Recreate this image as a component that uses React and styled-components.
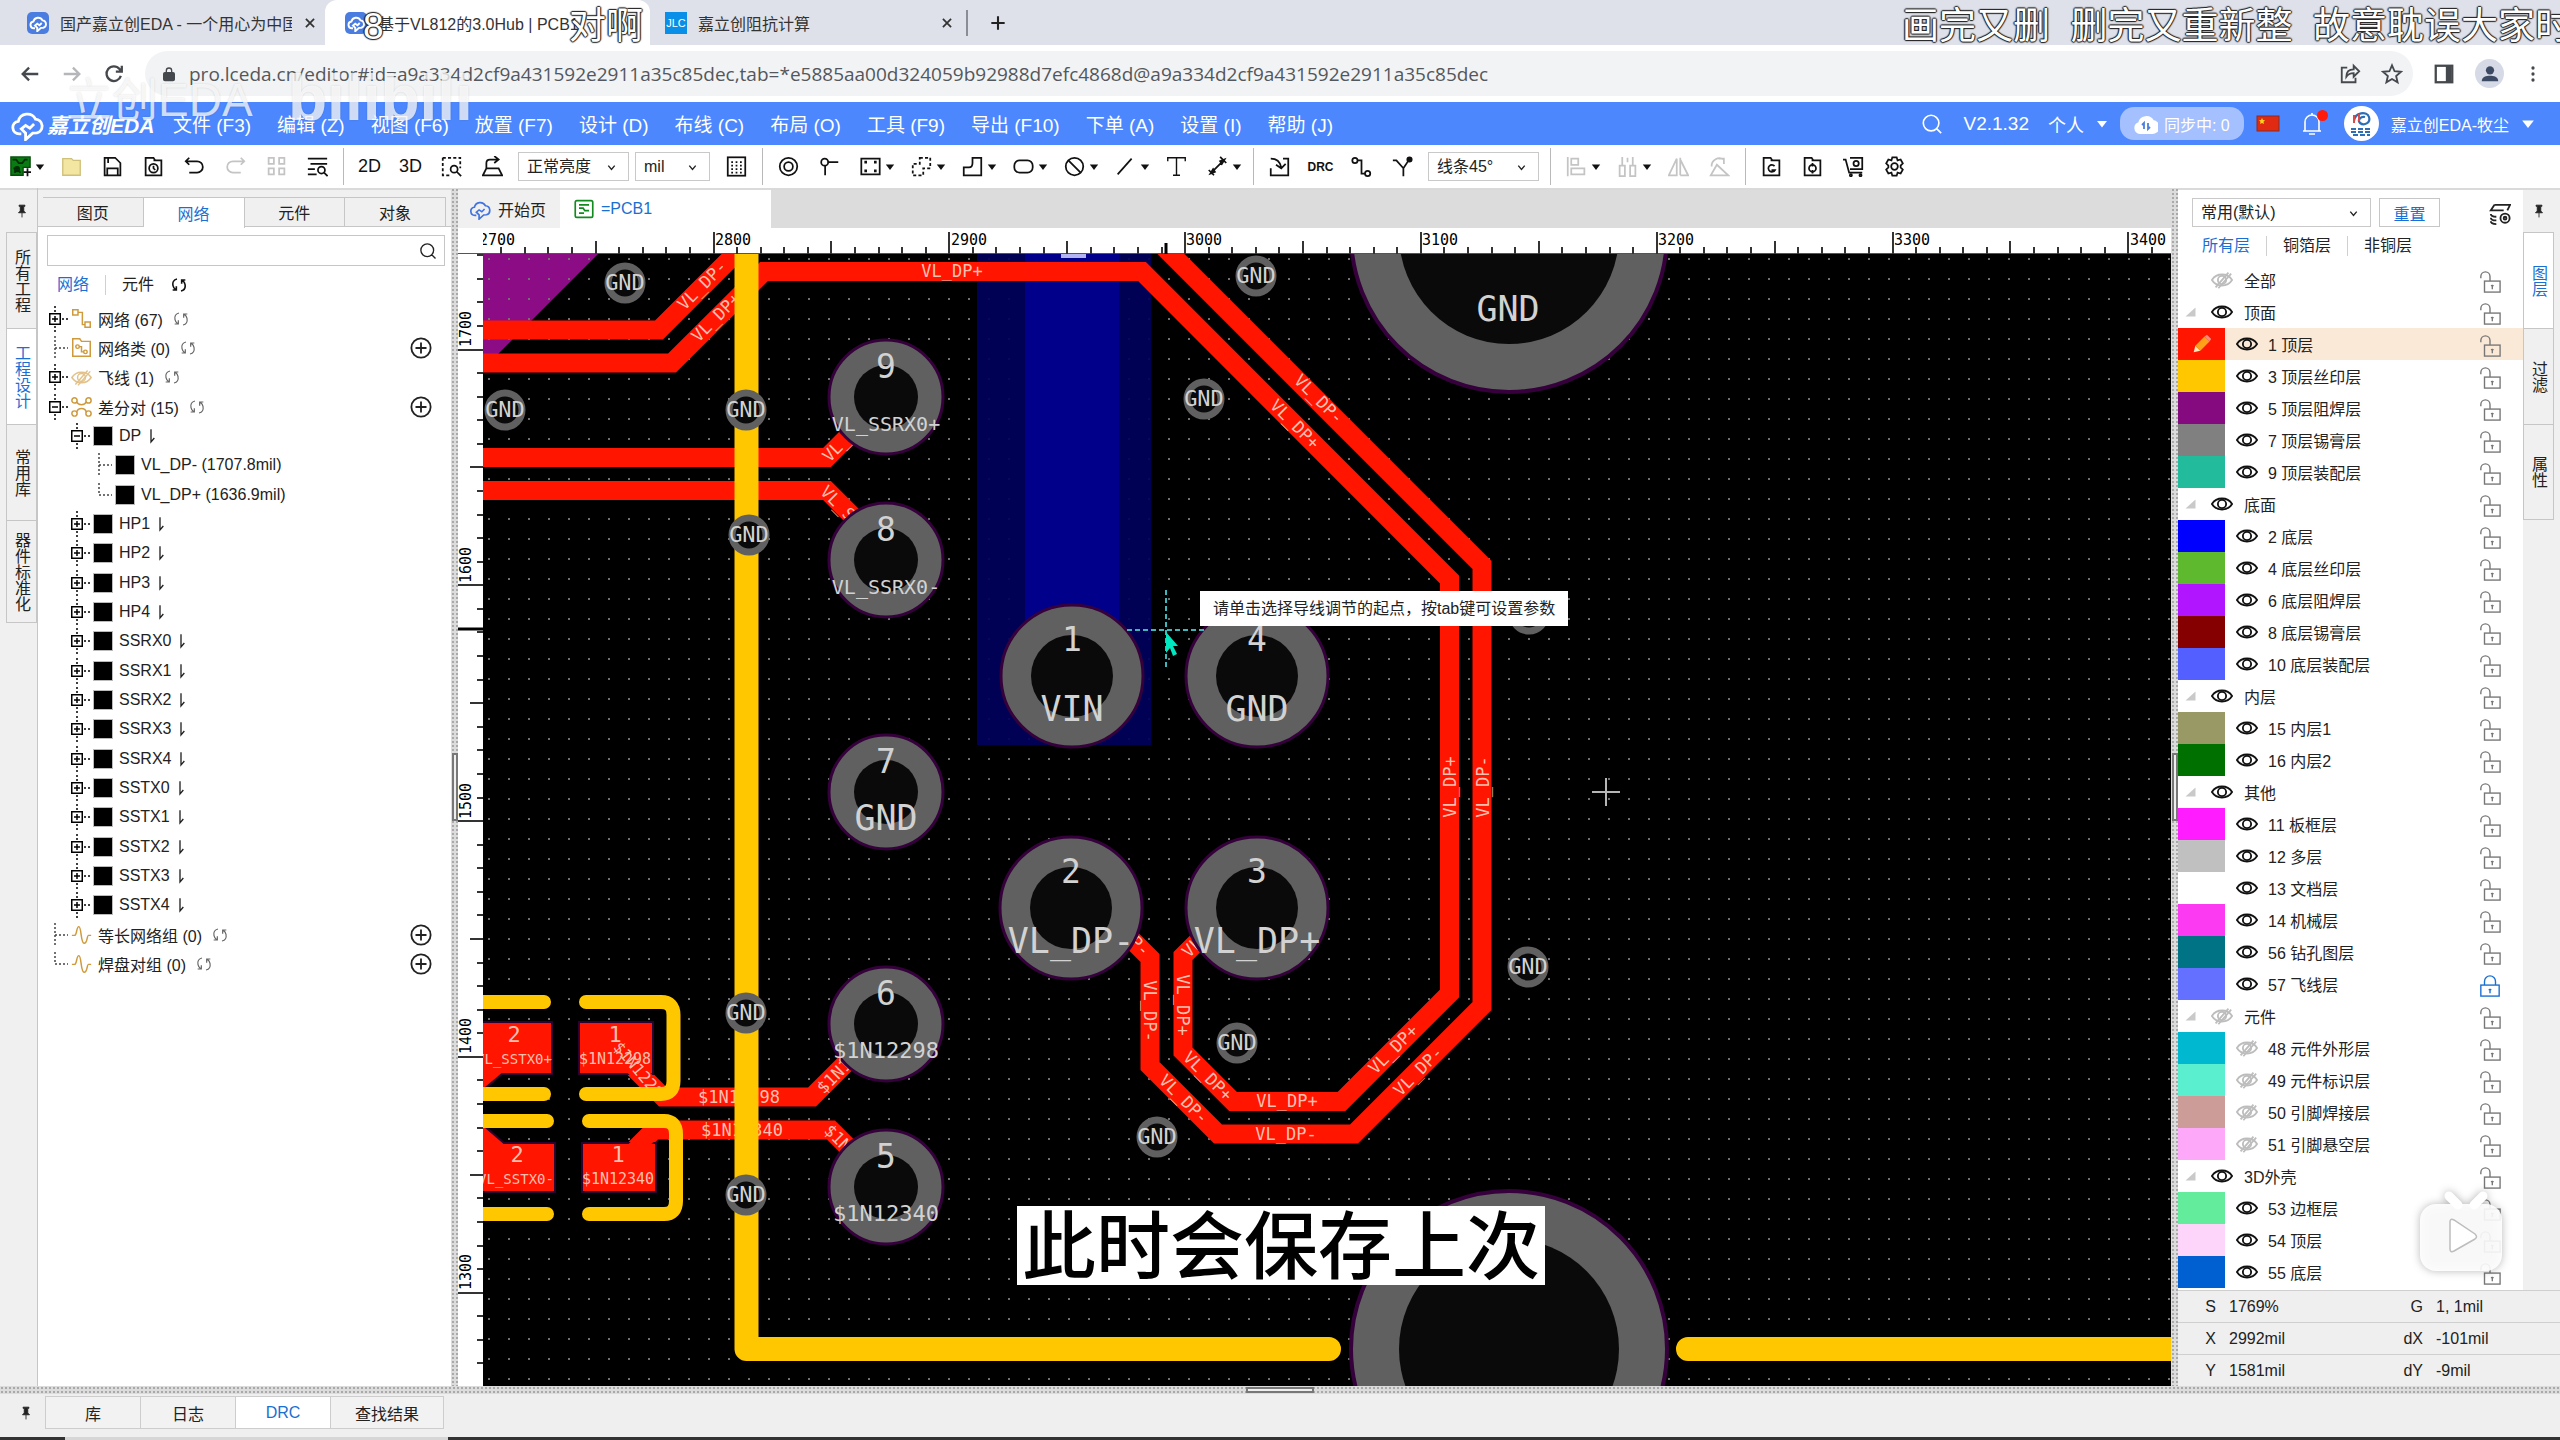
import React from 'react'
import styled, { createGlobalStyle, css } from 'styled-components'

const SHAPES = {
  cloud: <path d="M8 19H6.500a4.500 4.500 0 0 1-.6-8.960A6.500 6.500 0 0 1 18 8.500a5 5 0 0 1 1 9.800l-3 .2-5 4.500v-4.500l-3-3 3-2.500 3 2 3-3" />,
  back: <path d="M21 12H4M11 5l-7 7 7 7" />,
  forward: <path d="M3 12h17M13 5l7 7-7 7" />,
  reload: <path d="M19.500 14a8 8 0 1 1-1.500-7.500L20 9M20.500 3v6.500H14" />,
  lock: <><rect x="4" y="10" width="16" height="12" rx="2" fill="currentColor" /><path d="M8 10V7a4 4 0 0 1 8 0v3" /></>,
  close: <path d="M5 5l14 14M19 5L5 19" />,
  plus: <path d="M12 4v16M4 12h16" />,
  share: <path d="M9 5H3v16h15v-5M8 15c0-5 3-8 8-8V3l6 6-6 6v-4c-4 0-6 1-8 4z" />,
  star: <path d="M12 2.500l2.800 6.500 7 .6-5.300 4.600 1.600 6.900L12 17.400l-6.100 3.700 1.600-6.900L2.200 9.600l7-.6z" />,
  sidepanel: <><rect x="3" y="3" width="18" height="18" /><path d="M17 3v18" strokeWidth="6" /></>,
  person: <g fill="currentColor" stroke="none"><circle cx="12" cy="8" r="4.500" /><path d="M3 20c0-5 5-6 9-6s9 1 9 6z" /></g>,
  dots: <g fill="currentColor" stroke="none"><circle cx="12" cy="4" r="2.200" /><circle cx="12" cy="12" r="2.200" /><circle cx="12" cy="20" r="2.200" /></g>,
  search: <path d="M11 2.500a8.500 8.500 0 1 0 0 17 8.500 8.500 0 1 0 0-17M17 17l5 5" />,
  caret: <path d="M2 6h20L12 19z" fill="currentColor" stroke="none" />,
  chevron: <path d="M5 8l7 8 7-8" />,
  bell: <path d="M3 19h18M5 19v-9a7 7 0 0 1 14 0v9M12 3V1M9 22h6" />,
  sync: <><path d="M6 21a5 5 0 0 1-1-9.800A7.500 7.500 0 0 1 19 9a6 6 0 0 1-1 12z" fill="#fff" stroke="#fff" /><path d="M10 17v-6l-2 2M14 11v6l2-2" stroke="#4d7fe0" strokeWidth="1.800" /></>,
  newPcb: <><path d="M1 1h22v12h-8v9H1z" fill="#0a7a12" stroke="#064d0b" strokeWidth="1.500" /><path d="M3 4h4l3 4 4 0 3-4h3M4 14h6M5 19l3-3 4 3" stroke="#032d06" /><circle cx="8" cy="15" r="2.500" stroke="#032d06" /><path d="M20 14v9M15.500 18.500h9" stroke="#111" /></>,
  folder: <path d="M2 3h10l2 2h8v17H2z" fill="#f3e6a2" stroke="#cfc07a" strokeWidth="1.500" />,
  save: <path d="M3 2h12l6 6v14H3zM7 2v6M6 22v-8h12v8" />,
  clockFolder: <><path d="M3 2h9l2 3h7v17H3zM12 5h9" /><circle cx="12" cy="14" r="5" /><path d="M12 11v3l2 2" /></>,
  undo: <path d="M6 2L2 6l4 4M2 6h13a6.500 6.500 0 0 1 0 13H6" />,
  redo: <path d="M18 2l4 4-4 4M22 6H9a6.500 6.500 0 0 0 0 13h9" />,
  grid4: <path d="M3 2h6v7H3zM15 2h6v7h-6zM3 14h6v7H3zM15 14h6v7h-6z" />,
  listSearch: <><path d="M1 3h22M4 9h19M1 15h8M1 21h10" /><circle cx="16.500" cy="16" r="4" /><path d="M19.500 19l4 4" /></>,
  dashSearch: <><path d="M2 2h20v12M2 2v20h9" strokeDasharray="3.500 2.500" /><circle cx="15" cy="15" r="4" /><path d="M18 18l5 5" /></>,
  tilt: <path d="M1 22h22l-4-8H5zM5 14V8q0-4 4-4h9M14 0l5 4-5 4" />,
  dotGrid: <><rect x="2" y="1.500" width="20" height="21" /><path d="M6 7h13M6 11h13M6 15h13M6 19h13" strokeDasharray="2 3" /></>,
  via: <><circle cx="12" cy="12" r="10" /><circle cx="12" cy="12" r="5" /></>,
  net: <><circle cx="6.500" cy="7" r="4" /><path d="M10 7h12M7 11v11" /></>,
  padRect: <><rect x="1.500" y="3" width="21" height="18" /><path d="M5 7h3M16 7h3M5 17h3M16 17h3" strokeWidth="3" /></>,
  dashPoly: <path d="M10 2h12v12h-8v8H2V9h8z" strokeDasharray="3.500 2.500" />,
  poly: <path d="M12 2h10v20H2v-9h6q4 0 4-5z" />,
  oval: <rect x="1.500" y="5" width="21" height="14" rx="6" />,
  forbid: <><circle cx="12" cy="12" r="10" /><path d="M5 5l14 14" /></>,
  line: <path d="M3 21L19 3" />,
  text: <path d="M2 6V2h20v4M12 2v20M8 22h8" strokeWidth="1.600" />,
  measure: <path d="M5 19L19 5M2 16l6 6M15 1l7 7M4 20l3-5 2 3zM20 4l-3 5-2-3z" />,
  importBox: <path d="M16 3h6v19H2v-8M2 3q10 0 12 10M19 9l-5 5-6-4" />,
  netPath: <><circle cx="4.500" cy="5" r="3" /><circle cx="19" cy="20" r="3" /><path d="M7.500 5H12v15h4" /></>,
  fanout: <><path d="M1 5h4l8 9v9M13 14l6-9" /><circle cx="20" cy="4" r="2.500" fill="currentColor" /></>,
  align: <path d="M2 1v22M6 3h8v7H6zM6 14h15v7H6z" />,
  distribute: <path d="M3 11h6v12H3zM15 11h6v12h-6zM6 1v10M18 1v10M12 2v5" />,
  flipH: <path d="M10 3v19H1zM14 2v20M14 4l9 18h-9" />,
  flipV: <path d="M2 22h20L9 10zM3 12A9 9 0 0 1 17 4M17 9V3h-6" />,
  folderO: <><path d="M3 2h8l2 3h8v17H3zM11 5h10" /><circle cx="12" cy="14" r="4" /><path d="M12 8v4M12 16v4" /></>,
  folderG: <path d="M3 2h8l2 3h8v17H3zM11 5h10M15.500 11.500a4 4 0 1 0 .5 4.500h-4" />,
  cart: <><path d="M0 4h3l4 15h15M8 2h14v13H8" /><circle cx="15" cy="8.500" r="3" /><circle cx="9" cy="22" r="1.200" /><circle cx="20" cy="22" r="1.200" /></>,
  gear: <><path d="M9.500 1.500h5l1 3.500 3.500-1 2.500 4.500-2.500 2.500v2l2.500 2.500-2.500 4.500-3.500-1-1 3.500h-5l-1-3.500-3.500 1-2.500-4.500L5 13v-2L2.500 8.500 5 4l3.500 1z" /><circle cx="12" cy="12" r="3.800" /></>,
  pin: <path d="M7 2h10v2h-2v8l3 3H6l3-3V4H7zM12 15v8" fill="currentColor" strokeWidth="1.500" />,
  refresh: <path d="M9 3C4 4 2 8 3 13c.5 2.500 2 4.500 4 6M2.500 19.500H8V14M15 21c5-1 7-5 6-10-.5-2.500-2-4.500-4-6M21.500 4.500H16V10" />,
  netTree: <path d="M2 2h6v6H2zM16 16h6v6h-6zM8 5h5v14h3" />,
  netClass: <><path d="M2 2h8l2 3h10v17H2zM12 5h10" /><circle cx="7.500" cy="11" r="2" /><circle cx="16.500" cy="17" r="2" /><path d="M9.500 11H12v6h2.500" /></>,
  eye: <><path d="M1 12c5-8 17-8 22 0-5 8-17 8-22 0z" /><circle cx="12" cy="12" r="4.500" /></>,
  eyeOff: <><path d="M1 12c5-8 17-8 22 0-5 8-17 8-22 0z" /><circle cx="12" cy="12" r="4.500" /><path d="M5 20L19 4M8 21L22 5" /></>,
  diffPair: <><circle cx="4" cy="5" r="3" /><circle cx="20" cy="5" r="3" /><circle cx="4" cy="20" r="3" /><circle cx="20" cy="20" r="3" /><path d="M6.500 6.500C8 11 16 11 17.500 6.500M6.500 18.500C8 13 16 13 17.500 18.500" /></>,
  wave: <path d="M1 13h3c3 0 2-10 5-10s2 19 6 19 3-9 5-9h3" />,
  addCircle: <><circle cx="12" cy="12" r="10.500" /><path d="M12 6v12M6 12h12" /></>,
  branch: <path d="M6 2v19l5-6" />,
  pcbDoc: <><rect x="1.500" y="2" width="21" height="20" rx="2" /><path d="M6 7h12M6 11h5l2 3h5M6 17h6" /></>,
  layerSet: <><path d="M6 2h17l-3 6M6 2L2 8h14M2 12c0 2 2 3 6 3M2 16c0 2 2 3 6 3M2 20c0 2 2 3 6 3" /><circle cx="17.500" cy="16.500" r="5" /><circle cx="17.500" cy="16.500" r="1.500" /></>,
  fold: <path d="M21 3v18H1z" fill="#c9c9c9" stroke="none" />,
  unlocked: <><rect x="6" y="11" width="17" height="12" /><path d="M2 8V6a5 5 0 0 1 10 0v5M14.500 15v5M13 16h3" /></>,
  locked: <><rect x="2" y="11" width="20" height="12" /><path d="M6 11V7a6 6 0 0 1 12 0v4M12 15v5M10.500 16h3" /></>,
  pencil: <g stroke="none"><path d="M2 22l2-8 6 6z" fill="#ffe9c0" /><path d="M4 14L15 3l6 6-11 11z" fill="#ffa21a" /><path d="M15 3l3-2 5 5-2 3z" fill="#f28b82" /></g>,
}

function Icon({ name, size = 22, weight = 2 }) {
  return (
    <svg width={size} height={size} viewBox="0 0 24 24" fill="none" stroke="currentColor" strokeWidth={weight} aria-hidden="true">
      {SHAPES[name]}
    </svg>
  )
}

const MENUS = ['文件 (F3)', '编辑 (Z)', '视图 (F6)', '放置 (F7)', '设计 (D)', '布线 (C)', '布局 (O)', '工具 (F9)', '导出 (F10)', '下单 (A)', '设置 (I)', '帮助 (J)']

const TREE = [
  { level: 0, toggle: '+', icon: 'netTree', label: '网络 (67)', refresh: true },
  { level: 0, icon: 'netClass', label: '网络类 (0)', refresh: true, add: true },
  { level: 0, toggle: '+', icon: 'eyeOff', label: '飞线 (1)', refresh: true },
  { level: 0, toggle: '-', icon: 'diffPair', label: '差分对 (15)', refresh: true, add: true },
  { level: 1, toggle: '-', label: 'DP', branch: true },
  { level: 2, label: 'VL_DP- (1707.8mil)' },
  { level: 2, label: 'VL_DP+ (1636.9mil)', last: true },
  ...['HP1', 'HP2', 'HP3', 'HP4', 'SSRX0', 'SSRX1', 'SSRX2', 'SSRX3', 'SSRX4', 'SSTX0', 'SSTX1', 'SSTX2', 'SSTX3', 'SSTX4'].map(
    (label) => ({ level: 1, toggle: '+', label, branch: true })
  ),
  { level: 0, icon: 'wave', label: '等长网络组 (0)', refresh: true, add: true },
  { level: 0, icon: 'wave', label: '焊盘对组 (0)', refresh: true, add: true, last: true },
]

const LAYERS = [
  { group: true, label: '全部', hidden: true, root: true },
  { group: true, label: '顶面' },
  { label: '1 顶层', color: '#ff1500', active: true },
  { label: '3 顶层丝印层', color: '#ffc700' },
  { label: '5 顶层阻焊层', color: '#850a7f' },
  { label: '7 顶层锡膏层', color: '#808080' },
  { label: '9 顶层装配层', color: '#22bb9b' },
  { group: true, label: '底面' },
  { label: '2 底层', color: '#0000ff' },
  { label: '4 底层丝印层', color: '#5fb92e' },
  { label: '6 底层阻焊层', color: '#b114ff' },
  { label: '8 底层锡膏层', color: '#850000' },
  { label: '10 底层装配层', color: '#535fff' },
  { group: true, label: '内层' },
  { label: '15 内层1', color: '#999966' },
  { label: '16 内层2', color: '#007000' },
  { group: true, label: '其他' },
  { label: '11 板框层', color: '#ff1cff' },
  { label: '12 多层', color: '#c0c0c0' },
  { label: '13 文档层', color: '#ffffff' },
  { label: '14 机械层', color: '#fb3af1' },
  { label: '56 钻孔图层', color: '#007385' },
  { label: '57 飞线层', color: '#6470ff', locked: true },
  { group: true, label: '元件', hidden: true },
  { label: '48 元件外形层', color: '#00b8d0', hidden: true },
  { label: '49 元件标识层', color: '#5aefcf', hidden: true },
  { label: '50 引脚焊接层', color: '#cc9c98', hidden: true },
  { label: '51 引脚悬空层', color: '#fda8f8', hidden: true },
  { group: true, label: '3D外壳' },
  { label: '53 边框层', color: '#62ec9c' },
  { label: '54 顶层', color: '#fdd5fb' },
  { label: '55 底层', color: '#0060d2' },
]

const PADS = [
  { x: 886, y: 397, no: '9', name: 'VL_SSRX0+', size: 20 },
  { x: 886, y: 560, no: '8', name: 'VL_SSRX0-', size: 20 },
  { x: 886, y: 792, no: '7', name: 'GND', size: 35 },
  { x: 886, y: 1024, no: '6', name: '$1N12298', size: 22 },
  { x: 886, y: 1187, no: '5', name: '$1N12340', size: 22 },
  { x: 1072, y: 676, no: '1', name: 'VIN', size: 35, big: true },
  { x: 1257, y: 676, no: '4', name: 'GND', size: 35, big: true },
  { x: 1071, y: 908, no: '2', name: 'VL_DP-', size: 35, big: true },
  { x: 1257, y: 908, no: '3', name: 'VL_DP+', size: 35, big: true },
]

const VIAS = [
  [625, 283], [505, 410], [746, 410], [749, 535], [1256, 276], [1204, 399], [1529, 614],
  [746, 1013], [746, 1195], [1528, 967], [1237, 1043], [1157, 1137],
]

const TRACES = [
  'M470 330H659L745 244',
  'M470 363H672L764 271.500H1142L1449.500 579.500V993.500L1341.500 1101.500H1233L1183 1051.500V956L1215 924',
  'M1161 244L1482 565V1006L1354 1134H1218L1150 1066V958L1120 928',
  'M470 457.500H827L860 424.500',
  'M470 490.500H827L860 523.500',
  'M620 1054L663 1097H812L850 1059',
  'M625 1159L654 1130H831L860 1159',
]

const NET_LABELS = [
  [952, 271, 0, 'VL_DP+'], [702, 285, -45, 'VL_DP-'], [716, 317, -45, 'VL_DP+'],
  [836, 448, -45, 'VL_'], [838, 503, 45, 'VL_S'],
  [1319, 399, 45, 'VL_DP-'], [1295, 424, 45, 'VL_DP+'],
  [1450, 787, -90, 'VL_DP+'], [1483, 787, -90, 'VL_DP-'],
  [1393, 1049, -45, 'VL_DP+'], [1418, 1071, -45, 'VL_DP-'],
  [1287, 1101, 0, 'VL_DP+'], [1286, 1134, 0, 'VL_DP-'],
  [1208, 1076, 45, 'VL_DP+'], [1184, 1099, 45, 'VL_DP-'],
  [1150, 1011, 90, 'VL_DP-'], [1183, 1005, 90, 'VL_DP+'],
  [1140, 946, 45, 'P-'], [1192, 947, -45, 'VL'],
  [739, 1097, 0, '$1N12298'], [742, 1130, 0, '$1N12340'],
  [834, 1076, -45, '$1N1'], [838, 1138, 45, '$1N'],
]

function Pad({ x, y, no, name, size, big }) {
  return (
    <g>
      <circle cx={x} cy={y} r={big ? 71 : 57} fill="#606060" stroke="#35003b" strokeWidth="3" />
      <circle cx={x} cy={y} r={big ? 41 : 32} fill="#0a0a0a" />
      <text x={x} y={y - (big ? 25 : 19)} fontSize="33">{no}</text>
      <text x={x} y={y + (size < 30 ? 34 : big ? 45 : 38)} fontSize={size}>{name}</text>
    </g>
  )
}

function Board() {
  return (
    <StyledBoard role="img" aria-label="PCB1">
      <defs>
        <pattern id="dots" x="588" y="258" width="20" height="20" patternUnits="userSpaceOnUse">
          <rect width="2" height="2" fill="#707070" />
        </pattern>
      </defs>
      <g transform="translate(-483 -254)">
        <path d="M470 254H598L470 382z" fill="#8b0c84" />
        <rect x="483" y="254" width="2600" height="2000" fill="url(#dots)" />
        <rect x="977" y="250" width="174" height="495" fill="#00005c" fillOpacity="0.8" />
        <rect x="977" y="250" width="174" height="495" fill="#00005c" fillOpacity="0.6" />
        <rect x="1025" y="250" width="94" height="430" fill="#00008b" />
        <rect x="1061" y="250" width="25" height="8" fill="#b4b4f4" />
        <g fill="none" stroke="#ff1500" strokeWidth="19">
          {TRACES.map((d) => <path key={d} d={d} />)}
        </g>
        <g fill="#ff1500" stroke="#2c0030" strokeWidth="2">
          <path d="M470 1022H552V1074H502L483 1090H470z" />
          <path d="M579 1022h74v52h-74z" />
          <path d="M470 1125h13l21 18h51v49h-85z" />
          <path d="M582 1143h74v49h-74z" />
        </g>
        <path d="M622 1056L660 1094M628 1156L652 1132" stroke="#ff1500" strokeWidth="16" />
        <g fill="#ffbfae" fontSize="17" textAnchor="middle">
          {NET_LABELS.map(([x, y, turn, name]) => (
            <text key={x + name} transform={`translate(${x} ${y}) rotate(${turn})`} y="6">{name}</text>
          ))}
          <text transform="translate(638 1070) rotate(50)" y="5" fontSize="16">$1N1229</text>
          <text x="514" y="1042" fontSize="22">2</text>
          <text x="615" y="1042" fontSize="22">1</text>
          <text x="517" y="1162" fontSize="22">2</text>
          <text x="618" y="1162" fontSize="22">1</text>
          <text x="514" y="1064" fontSize="14">VL_SSTX0+</text>
          <text x="615" y="1064" fontSize="15">$1N12298</text>
          <text x="516" y="1184" fontSize="14">VL_SSTX0-</text>
          <text x="618" y="1184" fontSize="15">$1N12340</text>
        </g>
        <g fill="none" stroke="#ffc700" strokeLinecap="round" strokeLinejoin="round">
          <path d="M746.500 240V1349H1329M1688 1349H3000" strokeWidth="24" />
          <path d="M470 1002h74M470 1094h74M586 1002h75q12.500 0 12.500 13v66q0 13-12.500 13h-75" strokeWidth="14" />
          <path d="M470 1121h77M470 1214h77M589 1121h75q12 0 12 13v67q0 13-12 13h-75" strokeWidth="14" />
        </g>
        <g fill="#d2d2d2" textAnchor="middle">
          {PADS.map((pad) => <Pad key={pad.no} {...pad} />)}
          {[234, 1349].map((y) => (
            <g key={y}>
              <circle cx="1509" cy={y} r="158" fill="#606060" stroke="#35003b" strokeWidth="4" />
              <circle cx="1509" cy={y} r="110" fill="#0a0a0a" />
            </g>
          ))}
          <text x="1508" y="321" fontSize="35">GND</text>
          {VIAS.map(([x, y]) => (
            <g key={`${x}-${y}`}>
              <circle cx={x} cy={y} r="17" fill="#0a0a0a" stroke="#606060" strokeWidth="7" />
              <text x={x} y={y + 7} fontSize="22">GND</text>
            </g>
          ))}
        </g>
        <path d="M1127 630h79M1166 590v80" stroke="#3fb8bd" strokeWidth="2" strokeDasharray="5 3" />
        <path d="M1166 632l12 14h-5l4 8-4 2-3-8-4 5z" fill="#00e8c0" />
        <path d="M1592 792h28M1606 778v28" stroke="#b5b5b5" strokeWidth="2" />
      </g>
    </StyledBoard>
  )
}

const TICK = 23.58

function TopRuler() {
  return (
    <StyledTopRuler aria-hidden="true">
      <g transform="translate(-483 0)" stroke="#333" strokeWidth="2">
        {Array.from({ length: 120 }, (_, i) => {
          const x = Math.round(477.7 + i * TICK)
          return <path key={i} d={`M${x} 26V${i % 10 === 0 ? 4 : i % 5 === 0 ? 13 : 19}`} />
        })}
        <path d="M1166 26V15" stroke="#000" strokeWidth="3" />
        {Array.from({ length: 12 }, (_, i) => (
          <text key={i} x={Math.round(479 + i * TICK * 10)} y="17" stroke="none">{2700 + i * 100}</text>
        ))}
      </g>
    </StyledTopRuler>
  )
}

function SideRuler() {
  return (
    <StyledSideRuler aria-hidden="true">
      <g transform="translate(0 -254)" stroke="#333" strokeWidth="2">
        {Array.from({ length: 90 }, (_, i) => {
          const y = Math.round(349.5 + (i - 4) * TICK)
          return <path key={i} d={`M25 ${y}H${(i - 4) % 10 === 0 ? 0 : (i - 4) % 5 === 0 ? 12 : 19}`} />
        })}
        <path d="M0 629H25" stroke="#000" strokeWidth="3" />
        {Array.from({ length: 5 }, (_, i) => (
          <text key={i} transform={`translate(13 ${Math.round(347 + i * TICK * 10)}) rotate(-90)`} stroke="none">{1700 - i * 100}</text>
        ))}
      </g>
    </StyledSideRuler>
  )
}

function Tool({ icon, label, text, arrow, muted }) {
  return (
    <StyledTool type="button" aria-label={text ? undefined : label} $arrow={arrow}>
      <StyledToolFace $muted={muted} $small={text === 'DRC'}>{text || <Icon name={icon} size={21} />}</StyledToolFace>
      {arrow && <Icon name="caret" size={10} />}
    </StyledTool>
  )
}

function Picker({ label, value, width }) {
  return (
    <StyledPicker $width={width}>
      <select aria-label={label} defaultValue={value}>
        <option>{value}</option>
      </select>
      <Icon name="chevron" size={11} weight={3} />
    </StyledPicker>
  )
}

function BrowserBar() {
  return (
    <header>
      <StyledTabStrip>
        <StyledBrowserTab $width={325}>
          <StyledFavicon><Icon name="cloud" size={18} weight={2.5} /></StyledFavicon>
          <StyledTabTitle>国产嘉立创EDA - 一个用心为中国</StyledTabTitle>
          <StyledGhost type="button" aria-label="关闭"><Icon name="close" size={14} weight={3} /></StyledGhost>
        </StyledBrowserTab>
        <StyledBrowserTab $width={325} $active>
          <StyledFavicon><Icon name="cloud" size={18} weight={2.5} /></StyledFavicon>
          <StyledTabTitle>基于VL812的3.0Hub | PCB1</StyledTabTitle>
        </StyledBrowserTab>
        <StyledBrowserTab $width={318} $ruled>
          <StyledFavicon $jlc>JLC</StyledFavicon>
          <StyledTabTitle>嘉立创阻抗计算</StyledTabTitle>
          <StyledGhost type="button" aria-label="关闭"><Icon name="close" size={14} weight={3} /></StyledGhost>
        </StyledBrowserTab>
        <StyledNewTab type="button" aria-label="新标签页"><Icon name="plus" size={20} weight={2.5} /></StyledNewTab>
      </StyledTabStrip>
      <StyledAddressRow>
        <StyledNavButtons>
          <StyledGhost type="button" aria-label="后退"><Icon name="back" weight={2.5} /></StyledGhost>
          <StyledGhost type="button" aria-label="前进" $muted><Icon name="forward" weight={2.5} /></StyledGhost>
          <StyledGhost type="button" aria-label="刷新"><Icon name="reload" weight={2.5} /></StyledGhost>
        </StyledNavButtons>
        <StyledAddress>
          <Icon name="lock" size={16} />
          <input
            aria-label="地址"
            defaultValue="pro.lceda.cn/editor#id=a9a334d2cf9a431592e2911a35c85dec,tab=*e5885aa00d324059b92988d7efc4868d@a9a334d2cf9a431592e2911a35c85dec"
          />
          <StyledGhost type="button" aria-label="分享"><Icon name="share" /></StyledGhost>
          <StyledGhost type="button" aria-label="收藏"><Icon name="star" /></StyledGhost>
        </StyledAddress>
        <StyledNavButtons>
          <StyledGhost type="button" aria-label="侧边栏"><Icon name="sidepanel" weight={2.5} /></StyledGhost>
          <StyledProfile type="button" aria-label="用户"><Icon name="person" /></StyledProfile>
          <StyledGhost type="button" aria-label="更多"><Icon name="dots" size={18} /></StyledGhost>
        </StyledNavButtons>
      </StyledAddressRow>
    </header>
  )
}

function MenuBar() {
  return (
    <StyledMenuBar>
      <StyledBrand><Icon name="cloud" size={34} weight={2} /><span>嘉立创EDA</span></StyledBrand>
      <StyledMenus>
        {MENUS.map((menu) => <button type="button" key={menu}>{menu}</button>)}
      </StyledMenus>
      <StyledAccount>
        <StyledGhost type="button" aria-label="搜索"><Icon name="search" weight={1.8} /></StyledGhost>
        <StyledVersion>V2.1.32</StyledVersion>
        <StyledScope type="button">个人<Icon name="caret" size={12} /></StyledScope>
        <StyledSync><Icon name="sync" size={24} />同步中: 0</StyledSync>
        <svg width="24" height="17" viewBox="0 0 24 17" aria-hidden="true">
          <rect x="1" y="1" width="22" height="15" fill="#e02a12" stroke="#8f2a1c" />
          <path d="M6 3l1 2 2 .3-1.500 1.400.4 2.300L6 8l-1.900 1 .4-2.300L3 5.300 5 5z" fill="#ffd21f" />
        </svg>
        <StyledBell type="button" aria-label="消息"><Icon name="bell" size={24} weight={1.6} /></StyledBell>
        <svg width="35" height="35" viewBox="0 0 35 35" aria-hidden="true">
          <circle cx="17.500" cy="17.500" r="17.500" fill="#fff" />
          <path d="M10 15c1-9 13-10 15-4s-5 9-9 6c-3-3 1-7 5-6" fill="none" stroke="#2d6fb4" strokeWidth="2.200" />
          <path d="M10 9v8M15 8v7" stroke="#d94a4a" strokeWidth="2" />
          <path d="M7 23h21M7 26h21M9 29h17" stroke="#2d6fb4" strokeWidth="1.800" strokeDasharray="5 2" />
        </svg>
        <button type="button">嘉立创EDA-牧尘<Icon name="caret" size={14} /></button>
      </StyledAccount>
    </StyledMenuBar>
  )
}

function Toolbar() {
  return (
    <StyledToolbar>
      <Tool icon="newPcb" label="新建" arrow />
      <Tool icon="folder" label="打开" />
      <Tool icon="save" label="保存" />
      <Tool icon="clockFolder" label="历史" />
      <Tool icon="undo" label="撤销" />
      <Tool icon="redo" label="重做" muted />
      <Tool icon="grid4" label="阵列" muted />
      <Tool icon="listSearch" label="查找" />
      <StyledRule />
      <Tool text="2D" />
      <Tool text="3D" />
      <Tool icon="dashSearch" label="框选放大" />
      <Tool icon="tilt" label="翻转视图" />
      <Picker label="亮度" value="正常亮度" width={111} />
      <Picker label="单位" value="mil" width={75} />
      <Tool icon="dotGrid" label="网格" />
      <StyledRule />
      <Tool icon="via" label="过孔" />
      <Tool icon="net" label="焊盘" />
      <Tool icon="padRect" label="元件" arrow />
      <Tool icon="dashPoly" label="铺铜" arrow />
      <Tool icon="poly" label="填充" arrow />
      <Tool icon="oval" label="挖槽" arrow />
      <Tool icon="forbid" label="禁止区域" arrow />
      <Tool icon="line" label="线条" arrow />
      <Tool icon="text" label="文本" />
      <Tool icon="measure" label="测量" arrow />
      <StyledRule />
      <Tool icon="importBox" label="导入变更" />
      <Tool text="DRC" />
      <Tool icon="netPath" label="布线" />
      <Tool icon="fanout" label="扇出" />
      <Picker label="拐角" value="线条45°" width={111} />
      <StyledRule />
      <Tool icon="align" label="对齐" arrow muted />
      <Tool icon="distribute" label="分布" arrow muted />
      <Tool icon="flipH" label="水平翻转" muted />
      <Tool icon="flipV" label="垂直翻转" muted />
      <StyledRule />
      <Tool icon="folderG" label="导出Gerber" />
      <Tool icon="folderO" label="导出坐标" />
      <Tool icon="cart" label="下单" />
      <Tool icon="gear" label="设置" />
    </StyledToolbar>
  )
}

function TreeRow({ level, toggle, icon, label, refresh, add, branch, last }) {
  return (
    <StyledTreeRow $level={level}>
      {toggle ? (
        <StyledToggle type="button" aria-label={label}>
          <svg width="22" height="28" viewBox="0 0 22 28" fill="none" stroke="#000">
            <path d="M6 1v6M6 21v6M13 14h7" strokeWidth="1.500" strokeDasharray="2 2" />
            <rect x="0.750" y="8.750" width="10.500" height="10.500" strokeWidth="1.500" />
            <path d={toggle === '+' ? 'M3 14h6M6 11v6' : 'M3 14h6'} strokeWidth="1.500" />
          </svg>
        </StyledToggle>
      ) : (
        <svg width="22" height="28" viewBox="0 0 22 28" fill="none" stroke="#444" strokeDasharray="2 2" aria-hidden="true">
          <path d={last ? 'M6 2v12h13' : 'M6 2v23M6 14h13'} strokeWidth="1.500" />
        </svg>
      )}
      {icon ? <StyledTreeIcon $soft={icon === 'eyeOff'}><Icon name={icon} size={21} weight={1.7} /></StyledTreeIcon> : <StyledSwatchBox />}
      <span>{label}</span>
      {refresh && <StyledSmall type="button" aria-label="刷新"><Icon name="refresh" size={16} weight={1.8} /></StyledSmall>}
      {branch && <Icon name="branch" size={16} />}
      {add && <StyledAdd type="button" aria-label="新增"><Icon name="addCircle" /></StyledAdd>}
    </StyledTreeRow>
  )
}

function LeftPanel() {
  return (
    <>
      <StyledRail>
        <StyledPin type="button" aria-label="固定"><Icon name="pin" size={14} /></StyledPin>
        <StyledRailTab type="button">所有工程</StyledRailTab>
        <StyledRailTab type="button" $active>工程设计</StyledRailTab>
        <StyledRailTab type="button">常用库</StyledRailTab>
        <StyledRailTab type="button" $tall>器件标准化</StyledRailTab>
      </StyledRail>
      <StyledLeftPanel>
        <StyledPanelTabs>
          <button type="button">图页</button>
          <button type="button" aria-current="true">网络</button>
          <button type="button">元件</button>
          <button type="button">对象</button>
        </StyledPanelTabs>
        <StyledSearch>
          <input type="search" aria-label="搜索网络" />
          <Icon name="search" size={18} weight={1.8} />
        </StyledSearch>
        <StyledSubTabs $left>
          <button type="button" aria-current="true">网络</button>
          <button type="button">元件</button>
          <StyledSmall type="button" aria-label="刷新" $dark><Icon name="refresh" size={16} weight={2.4} /></StyledSmall>
        </StyledSubTabs>
        <StyledTree>
          {TREE.map((row) => <TreeRow key={row.label} {...row} />)}
        </StyledTree>
      </StyledLeftPanel>
      <StyledSplitter><StyledGrip /></StyledSplitter>
    </>
  )
}

function LayerRow({ group, root, label, color, hidden, locked, active }) {
  return (
    <StyledLayerRow $active={active}>
      {group ? <StyledFold>{!root && <Icon name="fold" size={12} />}</StyledFold> : (
        <StyledColor style={{ background: color }}>{active && <Icon name="pencil" size={20} />}</StyledColor>
      )}
      <StyledEye type="button" aria-label={`显示 ${label}`} $off={hidden} $group={group}>
        <Icon name={hidden ? 'eyeOff' : 'eye'} size={22} />
      </StyledEye>
      <span>{label}</span>
      <StyledLock type="button" aria-label={`锁定 ${label}`} $on={locked}>
        <Icon name={locked ? 'locked' : 'unlocked'} size={22} weight={1.5} />
      </StyledLock>
    </StyledLayerRow>
  )
}

function RightPanel() {
  return (
    <>
      <StyledSplitter><StyledGrip /></StyledSplitter>
      <StyledRightPanel>
        <StyledLayerArea>
          <StyledLayerHead>
            <Picker label="图层方案" value="常用(默认)" width={179} />
            <StyledReset type="button">重置</StyledReset>
            <StyledAdd type="button" aria-label="图层管理"><Icon name="layerSet" size={22} /></StyledAdd>
          </StyledLayerHead>
          <StyledSubTabs>
            <button type="button" aria-current="true">所有层</button>
            <button type="button">铜箔层</button>
            <button type="button">非铜层</button>
          </StyledSubTabs>
          <StyledLayers>
            {LAYERS.map((row) => <LayerRow key={row.label} {...row} />)}
          </StyledLayers>
        </StyledLayerArea>
        <StyledRail $right>
          <StyledPin type="button" aria-label="固定"><Icon name="pin" size={14} /></StyledPin>
          <StyledRailTab type="button" $active>图层</StyledRailTab>
          <StyledRailTab type="button">过滤</StyledRailTab>
          <StyledRailTab type="button">属性</StyledRailTab>
        </StyledRail>
        <StyledStatus>
          <div><dt>S</dt><dd>1769%</dd><dt>G</dt><dd>1, 1mil</dd></div>
          <div><dt>X</dt><dd>2992mil</dd><dt>dX</dt><dd>-101mil</dd></div>
          <div><dt>Y</dt><dd>1581mil</dd><dt>dY</dt><dd>-9mil</dd></div>
        </StyledStatus>
      </StyledRightPanel>
    </>
  )
}

function App() {
  return (
    <StyledPage>
      <GlobalStyle />
      <BrowserBar />
      <MenuBar />
      <Toolbar />
      <StyledWorkspace>
        <LeftPanel />
        <StyledCenter>
          <StyledDocTabs>
            <StyledDocTab type="button"><Icon name="cloud" size={22} weight={1.8} />开始页</StyledDocTab>
            <StyledDocTab type="button" $active><Icon name="pcbDoc" size={20} />=PCB1</StyledDocTab>
          </StyledDocTabs>
          <StyledRulerRow><TopRuler /></StyledRulerRow>
          <StyledCanvasRow>
            <SideRuler />
            <StyledCanvas>
              <Board />
              <StyledHint role="tooltip">请单击选择导线调节的起点，按tab键可设置参数</StyledHint>
              <StyledSubtitle>此时会保存上次</StyledSubtitle>
            </StyledCanvas>
          </StyledCanvasRow>
        </StyledCenter>
        <RightPanel />
      </StyledWorkspace>
      <StyledSplitter $flat><StyledGrip $flat /></StyledSplitter>
      <StyledBottomBar>
        <StyledPin type="button" aria-label="固定"><Icon name="pin" size={14} /></StyledPin>
        <StyledBottomTab type="button">库</StyledBottomTab>
        <StyledBottomTab type="button">日志</StyledBottomTab>
        <StyledBottomTab type="button" $active>DRC</StyledBottomTab>
        <StyledBottomTab type="button" $wide>查找结果</StyledBottomTab>
      </StyledBottomBar>

      <StyledComment $left={363}>8</StyledComment>
      <StyledComment $left={569}>对啊</StyledComment>
      <StyledComment $left={1902}>画完又删  删完又重新整  故意耽误大家时</StyledComment>
      <StyledMark $left={66} $top={73} $size={46}>立创EDA</StyledMark>
      <StyledMark $left={288} $top={60} $size={64} $bold>bilibili</StyledMark>
      <StyledPlayer viewBox="0 0 100 96" aria-hidden="true">
        <path d="M38 12l9 9M72 12l-9 9" stroke="#fff" strokeWidth="9" strokeLinecap="round" />
        <rect x="9" y="20" width="82" height="67" rx="16" fill="#fff" fillOpacity="0.9" />
        <path d="M39 38q0-4 4-2l21 14q3 3 0 5L43 67q-4 2-4-2z" fill="#fff" stroke="#bdbdbd" strokeWidth="1.500" />
      </StyledPlayer>
    </StyledPage>
  )
}

const GlobalStyle = createGlobalStyle`
  *{
    box-sizing: border-box;
  }
  body{
    margin: 0;
    background: #333;
  }
  body, button, input, select{
    font-family: "Liberation Sans", "Noto Sans CJK SC", sans-serif;
    font-size: 16px;
    color: #222;
  }
  button{
    padding: 0;
    border: 0;
    background: none;
    white-space: nowrap;
  }
  svg{
    flex: none;
    display: block;
  }
  ul, dl, dd{
    margin: 0;
    padding: 0;
    list-style: none;
  }
`

const StyledPage = styled.div`
  position: relative;
  display: flex;
  flex-direction: column;
  height: 100vh;
  overflow: hidden;
  padding-bottom: 3px;
  background: linear-gradient(90deg, #333 65px, #d6d6d6 65px 448px, #333 448px);
`

const StyledGhost = styled.button`
  display: flex;
  align-items: center;
  color: ${(p) => (p.$muted ? '#b4b6b9' : 'inherit')};
`

const StyledTabStrip = styled.div`
  display: flex;
  height: 45px;
  background: #dee1e9;
`

const StyledBrowserTab = styled.div`
  display: flex;
  align-items: center;
  gap: 11px;
  width: ${(p) => p.$width}px;
  padding: 0 8px 0 ${(p) => (p.$active ? 20 : p.$ruled ? 15 : 27)}px;
  color: #333;

  ${(p) => p.$active && css`
    border-radius: 12px 12px 0 0;
    background: #fff;
  `}
  ${(p) => p.$ruled && css`
    padding-right: 14px;
    background: linear-gradient(#8a8d94, #8a8d94) right / 2px 26px no-repeat;
  `}
`

const StyledFavicon = styled.span`
  display: flex;
  align-items: center;
  justify-content: center;
  flex: none;
  width: 22px;
  height: 22px;
  border-radius: ${(p) => (p.$jlc ? 0 : 5)}px;
  background: ${(p) => (p.$jlc ? '#0a8fe8' : '#4b7de0')};
  color: #fff;
  font-size: 11px;
`

const StyledTabTitle = styled.span`
  flex: 1;
  overflow: hidden;
  white-space: nowrap;
`

const StyledNewTab = styled(StyledGhost)`
  padding: 0 20px;
`

const StyledAddressRow = styled.div`
  display: flex;
  align-items: center;
  gap: 20px;
  height: 57px;
  padding: 0 18px 0 19px;
  background: #fff;
  color: #45484d;
`

const StyledNavButtons = styled.div`
  display: flex;
  align-items: center;
  gap: 20px;
`

const StyledAddress = styled.div`
  display: flex;
  flex: 1;
  align-items: center;
  gap: 20px;
  height: 45px;
  padding: 0 10px 0 16px;
  border-radius: 23px;
  background: #f1f3f5;

  input{
    flex: 1;
    min-width: 0;
    margin-left: -8px;
    padding: 0;
    border: 0;
    outline: 0;
    background: none;
    font-family: "Open Sans", "Noto Sans CJK SC", sans-serif;
    font-size: 19px;
    color: #54575b;
  }
`

const StyledProfile = styled(StyledGhost)`
  justify-content: center;
  width: 29px;
  height: 29px;
  border-radius: 50%;
  background: #d5dae6;
  color: #3d4a63;
`

const StyledMenuBar = styled.header`
  display: flex;
  align-items: center;
  height: 43px;
  padding: 0 25px 0 10px;
  background: #4c87fd;
  color: #fff;

  button{
    color: #fff;
  }
`

const StyledBrand = styled.div`
  display: flex;
  align-items: center;
  gap: 3px;
  width: 163px;
  font-size: 21px;
  font-style: italic;
  font-weight: bold;
  white-space: nowrap;
`

const StyledMenus = styled.nav`
  display: flex;
  flex: 1;
  gap: 26px;

  button{
    font-size: 19px;
  }
`

const StyledAccount = styled.div`
  display: flex;
  align-items: center;
  gap: 12px;

  button{
    display: flex;
    align-items: center;
    gap: 12px;
  }
`

const StyledVersion = styled.span`
  margin: 0 7px 0 8px;
  font-size: 19px;
`

const StyledScope = styled.button`
  font-size: 18px;
`

const StyledSync = styled.span`
  display: flex;
  align-items: center;
  gap: 6px;
  height: 33px;
  padding: 0 14px;
  border-radius: 14px;
  background: #a4c0fe;
`

const StyledBell = styled.button`
  position: relative;
  margin: 0 8px;

  &::after{
    content: '';
    position: absolute;
    top: -2px;
    right: -4px;
    width: 11px;
    height: 11px;
    border-radius: 50%;
    background: #ff1a0a;
  }
`

const StyledToolbar = styled.div`
  display: flex;
  align-items: center;
  height: 43px;
  background: #fff;
`

const StyledTool = styled.button`
  display: flex;
  align-items: center;
  gap: 4px;
  padding: 0 ${(p) => (p.$arrow ? 6 : 10)}px 0 10px;
  color: #111;
`

const StyledToolFace = styled.span`
  display: flex;
  justify-content: center;
  width: 21px;
  color: ${(p) => (p.$muted ? '#c4c4c4' : 'inherit')};
  font-size: ${(p) => (p.$small ? 12 : 18)}px;
  font-weight: ${(p) => (p.$small ? 'bold' : 'normal')};
`

const StyledRule = styled.span`
  width: 1px;
  height: 37px;
  margin: 0 5px;
  background: #b9b9b9;
`

const StyledPicker = styled.div`
  position: relative;
  width: ${(p) => p.$width}px;
  margin-right: 6px;

  ${StyledTool} + &{
    margin-left: 5px;
  }
  select{
    width: 100%;
    height: 29px;
    padding: 0 8px;
    border: 1px solid #c9c9c9;
    border-radius: 0;
    background: #fff;
    appearance: none;
  }
  svg{
    position: absolute;
    top: 10px;
    right: 12px;
    pointer-events: none;
  }
`

const StyledWorkspace = styled.main`
  display: flex;
  flex: 1;
  min-height: 0;
  background: #f0f0f0;
`

const StyledRail = styled.div`
  display: flex;
  flex-direction: column;
  flex: none;
  width: 37px;
  padding-left: ${(p) => (p.$right ? 0 : 6)}px;
  padding-right: ${(p) => (p.$right ? 6 : 0)}px;
  border-top: 2px solid #dadada;
  background: #f0f0f0;
`

const StyledPin = styled.button`
  display: flex;
  align-items: center;
  justify-content: center;
  height: 42px;
`

const StyledRailTab = styled.button`
  height: ${(p) => (p.$tall ? 103 : 96)}px;
  border: 1px solid #c6c6c6;
  border-bottom-width: 0;
  background: ${(p) => (p.$active ? '#fff' : '#f0f0f0')};
  color: ${(p) => (p.$active ? '#1a6fd2' : '#222')};
  line-height: 29px;
  writing-mode: vertical-rl;

  &:last-child{
    border-bottom-width: 1px;
  }
`

const StyledLeftPanel = styled.section`
  flex: none;
  width: 414px;
  border-left: 1px solid #c6c6c6;
  background: #fff;
`

const StyledPanelTabs = styled.div`
  display: flex;
  height: 39px;
  padding: 7px 5px 0;
  border-top: 2px solid #dadada;
  border-bottom: 1px solid #c6c6c6;
  background: #f0f0f0;

  button{
    flex: 1;
    border: 1px solid #c6c6c6;
    border-bottom-width: 0;
    border-left-width: 0;
  }
  button[aria-current]{
    height: 31px;
    background: #fff;
    color: #1a6fd2;
  }
`

const StyledSearch = styled.div`
  display: flex;
  align-items: center;
  height: 31px;
  margin: 8px 6px 0 9px;
  padding-right: 7px;
  border: 1px solid #c6c6c6;

  input{
    flex: 1;
    min-width: 0;
    border: 0;
    outline: 0;
    background: none;
  }
`

const StyledSubTabs = styled.div`
  display: flex;
  align-items: center;
  height: 38px;
  padding-left: ${(p) => (p.$left ? 19 : 24)}px;

  button{
    line-height: 20px;
  }
  button + button{
    margin-left: 16px;
    padding-left: 16px;
    border-left: 1px solid #d0d0d0;
  }
  button:last-child{
    border-left-color: ${(p) => (p.$left ? 'transparent' : '#d0d0d0')};
    ${(p) => p.$left && 'margin-left: 0;'}
  }
  button[aria-current]{
    color: #1a6fd2;
  }
`

const StyledSmall = styled.button`
  margin-left: 4px;
  color: ${(p) => (p.$dark ? '#111' : '#666')};
`

const StyledTree = styled.ul`
  li:nth-child(3n){
    height: 30px;
  }
`

const StyledTreeRow = styled.li`
  display: flex;
  align-items: center;
  gap: 6px;
  height: 29px;
  padding: 0 19px 0 ${(p) => 11 + p.$level * 22}px;

  > :nth-child(2){
    margin-left: -6px;
  }
`

const StyledToggle = styled.button`
  width: 22px;
`

const StyledTreeIcon = styled.span`
  color: #cf9a3c;
  opacity: ${(p) => (p.$soft ? 0.6 : 1)};
`

const StyledSwatchBox = styled.span`
  width: 20px;
  height: 20px;
  background: #000;
  border: 1px solid #bbb;
`

const StyledAdd = styled.button`
  margin-left: auto;
`

const StyledSplitter = styled.div`
  display: flex;
  flex: none;
  align-items: center;
  justify-content: center;
  width: ${(p) => (p.$flat ? 'auto' : '7px')};
  height: ${(p) => (p.$flat ? '8px' : 'auto')};
  background: #dcdcdc radial-gradient(#a9a9a9 1px, transparent 1px) 0 0 / 4px 4px;
`

const StyledGrip = styled.span`
  width: ${(p) => (p.$flat ? '68px' : '6px')};
  height: ${(p) => (p.$flat ? '6px' : '68px')};
  border: 2px solid #777;
  background: #eee;
`

const StyledCenter = styled.section`
  display: flex;
  flex: 1;
  flex-direction: column;
  min-width: 0;
  border-top: 2px solid #dadada;
`

const StyledDocTabs = styled.div`
  display: flex;
  height: 38px;
  background: #dcdcdc;
`

const StyledDocTab = styled.button`
  display: flex;
  align-items: center;
  gap: 7px;
  width: ${(p) => (p.$active ? 211 : 102)}px;
  padding-left: ${(p) => (p.$active ? 14 : 11)}px;
  background: ${(p) => (p.$active ? '#fff' : '#f0f0f0')};
  color: ${(p) => (p.$active ? '#1a6fd2' : '#222')};

  svg{
    color: ${(p) => (p.$active ? '#128a1e' : '#3f73e0')};
  }
`

const StyledRulerRow = styled.div`
  height: 26px;
  padding-left: 25px;
  border-bottom: 1px solid #555;
  background: #fff;
`

const StyledTopRuler = styled.svg`
  width: 100%;
  height: 26px;
  overflow: hidden;
  font-family: "DejaVu Sans Mono", monospace;
  font-size: 15px;
`

const StyledCanvasRow = styled.div`
  display: flex;
  flex: 1;
  min-height: 0;
`

const StyledSideRuler = styled.svg`
  width: 25px;
  height: 100%;
  background: #fff;
  font-family: "DejaVu Sans Mono", monospace;
  font-size: 15px;
`

const StyledCanvas = styled.div`
  position: relative;
  flex: 1;
  overflow: hidden;
  background: #000;
`

const StyledBoard = styled.svg`
  width: 100%;
  height: 100%;
  font-family: "DejaVu Sans Mono", monospace;
`

const StyledHint = styled.div`
  position: absolute;
  top: 337px;
  left: 717px;
  padding: 0 13px;
  background: #fff;
  line-height: 35px;
`

const StyledSubtitle = styled.div`
  position: absolute;
  top: 952px;
  left: 534px;
  padding: 4px 5px 0;
  background: #fff;
  color: #000;
  font-size: 74px;
  font-weight: 500;
  line-height: 75px;
`

const StyledRightPanel = styled.section`
  display: grid;
  flex: none;
  grid-template-columns: 1fr 37px;
  grid-template-rows: 1fr auto;
  width: 382px;
`

const StyledLayerArea = styled.div`
  min-height: 0;
  overflow: hidden;
  border-top: 2px solid #dadada;
  background: #fff;
`

const StyledLayerHead = styled.div`
  display: flex;
  align-items: flex-end;
  height: 37px;
  padding: 0 12px 0 14px;

  > :last-child{
    padding-bottom: 2px;
  }
`

const StyledReset = styled.button`
  width: 61px;
  height: 29px;
  margin-left: 2px;
  border: 1px solid #c6c6c6;
  color: #1a6fd2;
`

const StyledLayers = styled.ul`
  margin-top: -1px;

  li{
    height: 32px;
  }
`

const StyledLayerRow = styled.li`
  display: flex;
  align-items: center;
  padding-right: 22px;
  background: ${(p) => (p.$active ? '#fbe9d7' : '#fff')};
`

const StyledFold = styled.span`
  width: 33px;
  padding-left: 7px;
`

const StyledColor = styled.span`
  display: flex;
  align-items: center;
  justify-content: center;
  width: 47px;
  height: 32px;
`

const StyledEye = styled.button`
  margin: 0 ${(p) => (p.$group ? 11 : 10)}px 0 ${(p) => (p.$group ? 0 : 11)}px;
  color: ${(p) => (p.$off ? '#bdbdbd' : '#111')};
`

const StyledLock = styled.button`
  margin-left: auto;
  padding-top: 4px;
  color: ${(p) => (p.$on ? '#1a6fd2' : '#777')};
`

const StyledStatus = styled.dl`
  grid-column: 1 / 3;
  background: #efefef;

  div{
    display: grid;
    grid-template-columns: 38px 165px 16px 1fr;
    column-gap: 13px;
    align-items: center;
    height: 32px;
    border-top: 1px solid #cfcfcf;
  }
  dt{
    text-align: right;
    justify-self: end;
  }
`

const StyledBottomBar = styled.div`
  display: flex;
  height: 43px;
  padding: 2px 0 8px;
  background: #efefef;

  ${StyledPin}{
    width: 45px;
    height: 33px;
    padding-left: 7px;
  }
`

const StyledBottomTab = styled.button`
  width: ${(p) => (p.$wide ? 114 : 95)}px;
  border: 1px solid #cdcdcd;
  border-right-width: ${(p) => (p.$wide ? 1 : 0)}px;
  background: ${(p) => (p.$active ? '#fff' : '#f2f2f2')};
  color: ${(p) => (p.$active ? '#1a6fd2' : '#222')};
`

const StyledComment = styled.span`
  position: absolute;
  top: 4px;
  left: ${(p) => p.$left}px;
  color: #fff;
  font-size: 37px;
  line-height: 45px;
  white-space: pre;
  text-shadow: 1px 0 1px #222, -1px 0 1px #222, 0 1px 1px #222, 0 -1px 1px #222, 0 0 2px #222;
`

const StyledMark = styled.span`
  position: absolute;
  top: ${(p) => p.$top}px;
  left: ${(p) => p.$left}px;
  color: rgba(255, 255, 255, 0.75);
  font-size: ${(p) => p.$size}px;
  font-weight: ${(p) => (p.$bold ? 'bold' : 'normal')};
  line-height: 1.2;
  white-space: nowrap;
  pointer-events: none;
  text-shadow: 0 0 2px rgba(0, 0, 0, 0.15);
`

const StyledPlayer = styled.svg`
  position: absolute;
  right: 49px;
  bottom: 160px;
  width: 100px;
  height: 96px;
  fill: none;
  filter: drop-shadow(0 0 4px rgba(0, 0, 0, 0.3));
`

export default App
